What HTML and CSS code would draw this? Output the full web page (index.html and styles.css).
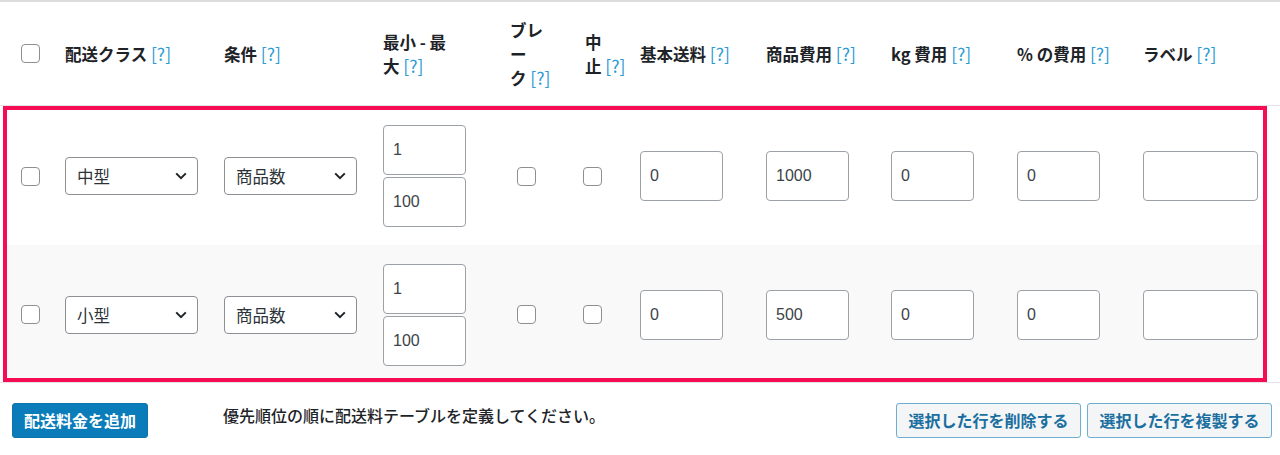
FILE: index.html
```html
<!DOCTYPE html>
<html lang="ja">
<head>
<meta charset="utf-8">
<title>配送料テーブル</title>
<link rel="stylesheet" href="styles.css">
</head>
<body>
<div class="page">
  <div class="thead">
    <div class="cell cb-head"><input type="checkbox" class="check"></div>
    <div class="cell th">配送クラス <a class="tip">[?]</a></div>
    <div class="cell th">条件 <a class="tip">[?]</a></div>
    <div class="cell th"><span class="ln">最小 - 最</span><span class="ln">大 <a class="tip">[?]</a></span></div>
    <div class="cell th"><span class="ln">ブレ</span><span class="ln">ー</span><span class="ln">ク <a class="tip">[?]</a></span></div>
    <div class="cell th th-stop"><span class="ln">中</span><span class="ln">止 <a class="tip">[?]</a></span></div>
    <div class="cell th">基本送料 <a class="tip">[?]</a></div>
    <div class="cell th">商品費用 <a class="tip">[?]</a></div>
    <div class="cell th">kg 費用 <a class="tip">[?]</a></div>
    <div class="cell th">% の費用 <a class="tip">[?]</a></div>
    <div class="cell th">ラベル <a class="tip">[?]</a></div>
  </div>

  <div class="tbody-wrap">
    <div class="tbody">
      <div class="row">
        <div class="cell cb-row"><input type="checkbox" class="check"></div>
        <div class="cell"><div class="select"><span>中型</span><svg width="12" height="8" viewBox="0 0 12 8"><path d="M1.2 1.4 L6 6.2 L10.8 1.4" fill="none" stroke="#1d2327" stroke-width="2"/></svg></div></div>
        <div class="cell"><div class="select"><span>商品数</span><svg width="12" height="8" viewBox="0 0 12 8"><path d="M1.2 1.4 L6 6.2 L10.8 1.4" fill="none" stroke="#1d2327" stroke-width="2"/></svg></div></div>
        <div class="cell"><div class="stack"><input class="field small" value="1"><input class="field small" value="100"></div></div>
        <div class="cell cb-break"><input type="checkbox" class="check"></div>
        <div class="cell"><input type="checkbox" class="check"></div>
        <div class="cell"><input class="field" value="0"></div>
        <div class="cell"><input class="field" value="1000"></div>
        <div class="cell"><input class="field" value="0"></div>
        <div class="cell"><input class="field" value="0"></div>
        <div class="cell"><input class="field wide" value=""></div>
      </div>
      <div class="row alt">
        <div class="cell cb-row"><input type="checkbox" class="check"></div>
        <div class="cell"><div class="select"><span>小型</span><svg width="12" height="8" viewBox="0 0 12 8"><path d="M1.2 1.4 L6 6.2 L10.8 1.4" fill="none" stroke="#1d2327" stroke-width="2"/></svg></div></div>
        <div class="cell"><div class="select"><span>商品数</span><svg width="12" height="8" viewBox="0 0 12 8"><path d="M1.2 1.4 L6 6.2 L10.8 1.4" fill="none" stroke="#1d2327" stroke-width="2"/></svg></div></div>
        <div class="cell"><div class="stack"><input class="field small" value="1"><input class="field small" value="100"></div></div>
        <div class="cell cb-break"><input type="checkbox" class="check"></div>
        <div class="cell"><input type="checkbox" class="check"></div>
        <div class="cell"><input class="field" value="0"></div>
        <div class="cell"><input class="field" value="500"></div>
        <div class="cell"><input class="field" value="0"></div>
        <div class="cell"><input class="field" value="0"></div>
        <div class="cell"><input class="field wide" value=""></div>
      </div>
    </div>
  </div>

  <div class="footer">
    <button class="btn-primary">配送料金を追加</button>
    <p class="note">優先順位の順に配送料テーブルを定義してください。</p>
    <div class="actions">
      <button class="btn-secondary">選択した行を削除する</button>
      <button class="btn-secondary">選択した行を複製する</button>
    </div>
  </div>
</div>
</body>
</html>
```

FILE: styles.css
```css
* { box-sizing: border-box; }

body {
  margin: 0;
  background: #ffffff;
  font-family: "Noto Sans CJK JP", "Noto Sans", sans-serif;
  color: #1d2327;
}

.page {
  width: 1280px;
  height: 455px;
  overflow: hidden;
  border-top: 2px solid #dcdcde;
}

.thead {
  display: grid;
  grid-template-columns: 65px 159px 159px 127px 73px 57px 126px 125px 126px 126px 1fr;
  align-items: center;
  height: 104px;
  border-bottom: 1px solid #e2e4e7;
}

.th {
  font-size: 16.5px;
  font-weight: 700;
  line-height: 24px;
  color: #1d2327;
  white-space: nowrap;
}

.ln { display: block; }

.th-stop { padding-left: 2px; }

.tip {
  font-weight: 400;
  color: #2a9bd3;
  font-size: 17.5px;
}

.cb-head { padding-left: 21px; }

.check {
  appearance: none;
  -webkit-appearance: none;
  margin: 0;
  display: block;
  width: 19px;
  height: 19px;
  border: 1px solid #8c8f94;
  border-radius: 4px;
  background: #ffffff;
}

.tbody-wrap {
  border-bottom: 1px solid #e2e4e7;
}

.tbody {
  margin-left: 3px;
  width: 1264px;
  border: 4px solid #f50c52;
}

.row {
  display: grid;
  grid-template-columns: 58px 159px 159px 127px 73px 57px 126px 125px 126px 126px 1fr;
  align-items: center;
  height: 135px;
  padding-bottom: 3px;
  background: #ffffff;
}

.row.alt {
  background: #f9f9f9;
  height: 133px;
  padding-top: 6px;
  padding-bottom: 0;
}

.cb-row { padding-left: 14px; }
.cb-break { padding-left: 7px; }

.select {
  width: 133px;
  height: 38px;
  border: 1px solid #8c8f94;
  border-radius: 4px;
  background: #ffffff;
  display: flex;
  align-items: center;
  justify-content: space-between;
  padding: 0 10px 0 11px;
  font-size: 16.5px;
  color: #2c3338;
}

.select svg { display: block; }

.stack {
  display: flex;
  flex-direction: column;
  gap: 2px;
}

.field {
  display: block;
  width: 83px;
  height: 50px;
  border: 1px solid #9ca1a7;
  border-radius: 4px;
  background: #ffffff;
  padding: 0 9px;
  font-family: "Liberation Sans", Arial, sans-serif;
  font-size: 16px;
  color: #3c434a;
  margin: 0;
}

.field.wide { width: 115px; }

.footer {
  display: flex;
  align-items: flex-start;
  padding: 20px 8px 0 12px;
}

.btn-primary {
  height: 35px;
  padding: 0 11px;
  background: #0b7cba;
  color: #ffffff;
  border: 1px solid #0a74ad;
  border-radius: 3px;
  font-family: "Noto Sans CJK JP", sans-serif;
  font-size: 16px;
  font-weight: 700;
  line-height: 33px;
}

.note {
  margin: 0 0 0 75px;
  line-height: 24px;
  font-size: 16px;
  font-weight: 500;
  color: #1d2327;
}

.actions {
  margin-left: auto;
  display: flex;
  gap: 6px;
}

.btn-secondary {
  height: 35px;
  padding: 0 11.5px;
  background: #f3f5f6;
  color: #1a6fa0;
  border: 1px solid #6daed1;
  border-radius: 3px;
  font-family: "Noto Sans CJK JP", sans-serif;
  font-size: 16px;
  font-weight: 700;
  line-height: 33px;
}
```
